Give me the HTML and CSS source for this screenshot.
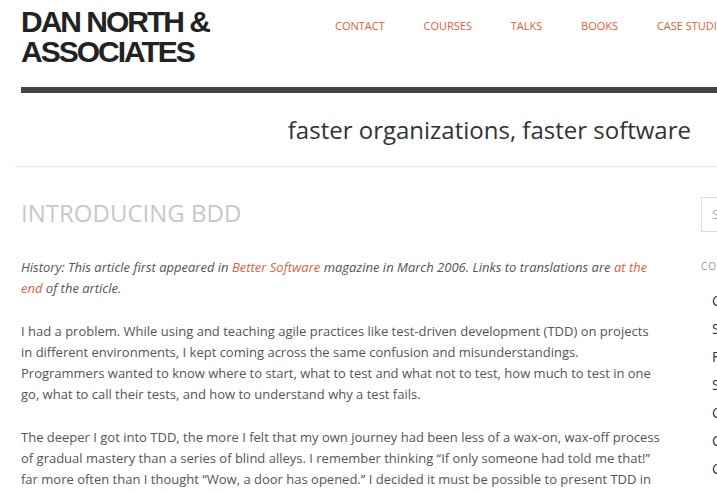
FILE: index.html
```html
<!DOCTYPE html>
<html lang="en">
<head>
<meta charset="utf-8">
<title>Introducing BDD | Dan North &amp; Associates</title>
<link rel="stylesheet" href="styles.css">
</head>
<body>
<div class="page">
  <header class="site-header">
    <div class="logo">DAN NORTH &amp;<br>ASSOCIATES</div>
    <nav class="nav">
      <a href="#">Contact</a>
      <a href="#">Courses</a>
      <a href="#">Talks</a>
      <a href="#">Books</a>
      <a href="#">Case Studies</a>
      <a href="#">Blog</a>
    </nav>
  </header>
  <div class="bar"></div>
  <div class="tagline">faster organizations, faster software</div>
  <div class="rule"></div>
  <div class="main">
    <article class="article">
      <h1 class="title">Introducing BDD</h1>
      <p class="history"><em>History: This article first appeared in <a href="#">Better Software</a> magazine in March 2006. Links to translations are <a href="#">at the end</a> of the article.</em></p>
      <p>I had a problem. While using and teaching agile practices like test-driven development (TDD) on projects in different environments, I kept coming across the same confusion and misunderstandings. Programmers wanted to know where to start, what to test and what not to test, how much to test in one go, what to call their tests, and how to understand why a test fails.</p>
      <p>The deeper I got into TDD, the more I felt that my own journey had been less of a wax-on, wax-off process of gradual mastery than a series of blind alleys. I remember thinking “If only someone had told me that!” far more often than I thought “Wow, a door has opened.” I decided it must be possible to present TDD in a way that gets straight to the good stuff and avoids all the pitfalls.</p>
    </article>
    <aside class="sidebar">
      <div class="search">Search</div>
      <div class="side-heading">Contents</div>
      <ul class="side-list">
        <li>Coaching</li>
        <li>Software</li>
        <li>Facilitation</li>
        <li>Speaking</li>
        <li>Consulting</li>
        <li>Culture</li>
        <li>Craft</li>
      </ul>
    </aside>
  </div>
</div>
</body>
</html>
```
FILE: styles.css
```css
html, body {
  margin: 0;
  padding: 0;
  background: #fff;
}
body {
  overflow: hidden;
  font-family: "Open Sans", "Noto Sans", sans-serif;
  color: #555;
}
.page {
  width: 1000px;
  padding-left: 21px;
}
.site-header {
  display: flex;
  align-items: flex-start;
  height: 87px;
}
.logo {
  font-family: "Liberation Sans", Arial, sans-serif;
  font-weight: bold;
  font-size: 30px;
  line-height: 30px;
  letter-spacing: -2px;
  color: #222;
  margin-top: 7px;
  width: 314px;
}
.nav {
  display: flex;
  gap: 38.75px;
  margin-top: 17px;
  white-space: nowrap;
}
.nav a {
  font-size: 11px;
  text-transform: uppercase;
  color: #e0603c;
  text-decoration: none;
  line-height: 18px;
}
.bar {
  height: 6px;
  background: #444;
}
.tagline {
  width: 670px;
  text-align: right;
  font-size: 24px;
  line-height: 30px;
  color: #333;
  margin-top: 22px;
}
.rule {
  height: 1px;
  background: #e6e6e6;
  margin-top: 21px;
  margin-left: -6px;
}
.main {
  display: flex;
  align-items: flex-start;
}
.article {
  width: 640px;
  margin-right: 40px;
  font-size: 13px;
  line-height: 21px;
}
.title {
  margin: 31px 0 0;
  font-size: 24px;
  line-height: 30px;
  font-weight: normal;
  text-transform: uppercase;
  color: #c8c8c8;
}
.article p {
  margin: 0 0 22px;
}
.article p.history {
  margin-top: 29px;
}
.article a {
  color: #e0603c;
  text-decoration: none;
}
.sidebar {
  width: 250px;
}
.search {
  margin-top: 30px;
  height: 33px;
  border: 1px solid #ddd;
  padding-left: 10px;
  font-size: 13px;
  line-height: 33px;
  color: #aaa;
}
.side-heading {
  margin-top: 27px;
  font-size: 10px;
  line-height: 14px;
  letter-spacing: 1px;
  text-transform: uppercase;
  color: #999;
}
.side-list {
  list-style: none;
  margin: 14px 0 0;
  padding: 0 0 0 11px;
}
.side-list li {
  font-size: 14px;
  line-height: 28px;
  color: #333;
}
```
